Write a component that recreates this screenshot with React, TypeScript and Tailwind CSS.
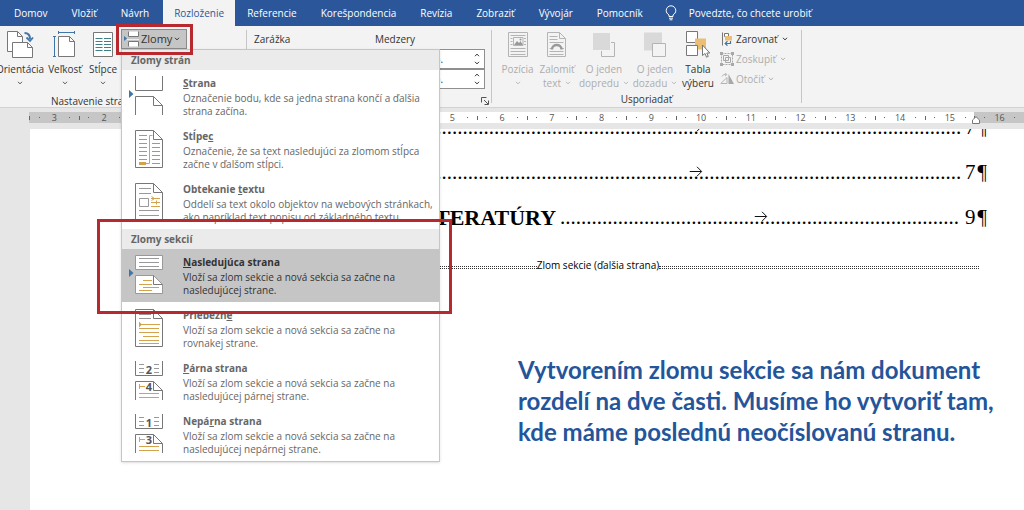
import type { ReactNode } from 'react';

const ui = "font-['Open_Sans','Noto_Sans',sans-serif]";

function Chevron({ className = '' }: { className?: string }) {
  return (
    <svg viewBox="0 0 6 4" className={`inline-block h-1 w-1.5 shrink-0 ${className}`} fill="none" stroke="currentColor">
      <path d="M1 0.8 3 2.9 5 0.8" />
    </svg>
  );
}

const tabs = ['Domov', 'Vložiť', 'Návrh', 'Rozloženie', 'Referencie', 'Korešpondencia', 'Revízia', 'Zobraziť', 'Vývojár', 'Pomocník'];

function TabBar() {
  return (
    <nav className="flex h-[26px] items-stretch bg-[#2b579a] pl-0.5 text-white">
      {tabs.map((t) => (
        <button
          key={t}
          className={
            t === 'Rozloženie'
              ? 'ml-0.5 bg-[#f3f3f3] px-[11px] whitespace-nowrap text-[#2b579a]'
              : 'px-3 whitespace-nowrap'
          }
        >
          {t}
        </button>
      ))}
      <button className="flex items-center gap-3 pr-3 pl-2.5 whitespace-nowrap">
        <svg viewBox="0 0 12 16" className="h-4 w-3" fill="none" stroke="currentColor">
          <path d="M4 11.500V10C2.300 8.800 1.200 7.500 1.200 5.600a4.800 4.800 0 0 1 9.600 0C10.800 7.500 9.700 8.800 8 10v1.500zM4 13.200h4M4.600 14.800h2.800" />
        </svg>
        Povedzte, čo chcete urobiť
      </button>
    </nav>
  );
}

const OrientationIcon = () => (
  <svg viewBox="0 0 28 28" className="h-7 w-7" fill="#fff" stroke="#777">
    <path d="M1.500 20.500V.5h10l5 5v15z" />
    <path d="M11.500.5v5h5" fill="none" />
    <path d="M6.500 26.500v-15h15l5 5v10z" />
    <path d="M21.500 11.500v5h5" fill="none" />
    <path d="M18.500 2c4 0 5.500 2 5.500 6" fill="none" stroke="#3f75a8" strokeWidth="2" />
    <path d="M20.500 6.500 24 10l3-3.500" fill="none" stroke="#3f75a8" strokeWidth="1.800" />
  </svg>
);

const SizeIcon = () => (
  <svg viewBox="0 0 24 28" className="h-7 w-6" fill="none" stroke="#777">
    <path d="M5.500 25.500v-20h11l5 5v15z" fill="#fff" />
    <path d="M16.500 5.500v5h5" />
    <path d="M1.500 5v21M0 5.500h3M0 25.500h3M5 1.500h17M5.500 0v3M21.500 0v3" stroke="#3f75a8" />
  </svg>
);

const ColumnsIcon = () => (
  <svg viewBox="0 0 22 28" className="h-7 w-[22px]" fill="none">
    <path d="M1.500 1.500h19v24h-19z" fill="#fff" stroke="#777" />
    <path d="M3.500 7.500h7M3.500 10.500h7M3.500 13.500h7M3.500 16.500h7M3.500 19.500h7M12 7.500h7M12 10.500h7M12 13.500h7M12 16.500h7M12 19.500h7" stroke="#3f8087" />
  </svg>
);

const PositionIcon = () => (
  <svg viewBox="0 0 22 28" className="h-7 w-[22px]" fill="none" stroke="#b4b4b4">
    <path d="M1.500 1.500h19v24h-19z" />
    <path d="M3.500 4.500h15M3.500 17.500h15M3.500 20.500h15M3.500 23.500h15M3.500 7.500h2M3.500 10.500h2M3.500 13.500h2M17 7.500h2M17 10.500h2M17 13.500h2" />
    <path d="M6.500 6.500h9.500v8H6.500z" />
    <path d="M7 14l3-4 2 2 1.500-2L16 14z" fill="#999" stroke="none" />
    <circle cx="13.500" cy="8.500" r="1" fill="#999" stroke="none" />
  </svg>
);

const WrapIcon = () => (
  <svg viewBox="0 0 22 28" className="h-7 w-[22px]" fill="none" stroke="#b4b4b4">
    <path d="M1.500 25.500v-24h12l6 6v18z" />
    <path d="M13.500 1.500v6h6M3.500 5.500h8M3.500 8.500h8M3.500 11.500h14M3.500 20.500h14M3.500 23.500h14M3.500 17.500h2M16 17.500h2" />
    <path d="M6 18.500c0-6 9.500-6 9.500 0" stroke="#999" strokeWidth="2.500" />
  </svg>
);

const ForwardIcon = () => (
  <svg viewBox="0 0 24 28" className="h-7 w-6" fill="#f3f3f3" stroke="#b4b4b4">
    <path d="M9.500 11.500h13v14h-13z" />
    <path d="M.5 1.500h18v18H.5z" fill="#d9d9d9" stroke="#f3f3f3" />
  </svg>
);

const BackwardIcon = () => (
  <svg viewBox="0 0 24 28" className="h-7 w-6" fill="#f3f3f3" stroke="#b4b4b4">
    <path d="M1 1.500h18v18H1z" fill="#d9d9d9" stroke="none" />
    <path d="M9.500 12.500h13v13h-13z" />
  </svg>
);

const SelectionIcon = () => (
  <svg viewBox="0 0 26 28" className="h-7 w-[26px]" fill="#fff" stroke="#777">
    <path d="M1.500.5h11v11h-11z" />
    <path d="M10 7.500h11v11H10z" fill="#eabf74" stroke="none" />
    <path d="M1.500 14.500h11v10h-11z" />
    <path d="M17.500 14v10.500l2.500-2 1.500 3.700 1.800-.8-1.500-3.400h3z" />
  </svg>
);

const AlignIcon = () => (
  <svg viewBox="0 0 14 14" className="h-3.5 w-3.5" fill="none">
    <path d="M2.500.5v13" stroke="#777" />
    <path d="M4.500 1.500h4v3h-4z" stroke="#777" fill="#fff" />
    <path d="M5 4h7v4.500H5z" fill="#eabf74" />
    <path d="M10.500 9v2.500H5.500M7.500 9.200 5.200 11.500l2.300 2.200" stroke="#3f75a8" strokeWidth="1.200" />
  </svg>
);

const GroupIcon = () => (
  <svg viewBox="0 0 14 14" className="h-3.5 w-3.5" fill="none" stroke="#a8a8a8">
    <path d="M1.500 1.500h11v11h-11z" strokeDasharray="2 1" />
    <path d="M3.500 3.500h5v5h-5zM5.500 5.500h5v5h-5z" />
    <path d="M0 0h3v3H0zM11 0h3v3h-3zM0 11h3v3H0zM11 11h3v3h-3z" fill="#a8a8a8" stroke="none" />
  </svg>
);

const RotateIcon = () => (
  <svg viewBox="0 0 14 14" className="h-3.5 w-3.5" fill="none" stroke="#b4b4b4">
    <path d="M.8 11.500 7 5.500v6z" />
    <path d="M8.500 2v10H14z" fill="#a8a8a8" stroke="none" />
    <path d="M2 4.500C3 2.500 4.500 2 6.500 2.500M5.300 1l1.500 1.600L5 4" />
  </svg>
);

function BigButton({ icon, lines, width, disabled, chevron }: {
  icon: ReactNode;
  lines: string[];
  width: string;
  disabled?: boolean;
  chevron?: 'below' | 'inline';
}) {
  return (
    <button disabled={disabled} className={`flex shrink-0 flex-col items-center pt-[5px] leading-[14px] ${width} ${disabled ? 'text-[#adadad]' : 'text-[#333]'}`}>
      {icon}
      <span className="mt-[3px] whitespace-nowrap">{lines[0]}</span>
      <span className="flex h-3.5 items-center gap-1 whitespace-nowrap">
        {lines[1]}
        {chevron && <Chevron className="opacity-80" />}
      </span>
    </button>
  );
}

function SmallButton({ icon, label, disabled }: { icon: ReactNode; label: string; disabled?: boolean }) {
  return (
    <button disabled={disabled} className={`flex h-5 items-center gap-0.5 whitespace-nowrap ${disabled ? 'text-[#adadad]' : 'text-[#333]'}`}>
      {icon}
      {label}
      <Chevron className="ml-0.5" />
    </button>
  );
}

function Sheet({ children }: { children: ReactNode }) {
  return (
    <svg viewBox="0 0 36 40" className="h-10 w-9 shrink-0" fill="none" stroke="#777">
      {children}
    </svg>
  );
}

const corner = 'M25.500 1.500v9h9';
const fullSheet = 'M7.500 38.500v-37h18l9 9v28z';
const pointer = 'M1 14v8l4.500-4z';
const gold = '#d3a24c';

const PageBreakIcon = () => (
  <Sheet>
    <path d="M7.500 0v14.500h27V0M7.500 39V20.500h18l9 9V39M25.500 20.500v9h9" fill="#fff" />
    <path d={pointer} fill="#3f75a8" stroke="none" />
  </Sheet>
);

const ColumnBreakIcon = () => (
  <Sheet>
    <path d={fullSheet} fill="#fff" />
    <path d={corner} />
    <path d="M11 6.500h8M11 10.500h8M11 14.500h8M11 18.500h8M11 22.500h8M11 26.500h8M11 30.500h8M24 14.500h8M24 18.500h8M24 22.500h8M24 26.500h8M24 30.500h8M24 34.500h8" stroke="#999" />
    <path d="M18 34.500h3.500V6.500h3" stroke={gold} />
    <path d="M11 33h7v3h-7z" fill={gold} stroke="none" />
  </Sheet>
);

const WrapBreakIcon = () => (
  <Sheet>
    <path d={fullSheet} fill="#fff" />
    <path d={corner} />
    <path d="M11 6.500h12M11 11.500h12M11 28.500h20M11 33.500h20M11.500 16.500h9v8h-9z" stroke="#999" />
    <path d="M23 16.500h9M23 20.500h9M23 24.500h9M23.500 14.500l3 2-3 2M28.500 18.500v4" stroke={gold} />
  </Sheet>
);

const NextPageIcon = () => (
  <Sheet>
    <path d="M7.500.5h27v14h-27zM7.500 38.500v-18h18l9 9v9z" fill="#fff" stroke="#999" />
    <path d="M25.500 20.500v9h9" />
    <path d="M11 3.500h20M11 7.500h20M11 11.500h20" stroke="#999" />
    <path d="M15 25.500h9M11 29.500h13M15 32.500h16M11 35.500h13" stroke={gold} />
    <path d={pointer} fill="#3f75a8" stroke="none" />
  </Sheet>
);

const ContinuousIcon = () => (
  <Sheet>
    <path d={fullSheet} fill="#fff" />
    <path d={corner} />
    <path d="M11 6.500h12M11 10.500h12" stroke="#999" />
    <path d="M13 16.500h19M11 20.500h20M11 24.500h20M15 28.500h16M11 32.500h20M11 35.500h20" stroke={gold} />
    <path d="M11 13.500v6l3-3z" fill={gold} stroke="none" />
  </Sheet>
);

function NumberedIcon({ top, bottom }: { top: string; bottom: string }) {
  return (
    <Sheet>
      <path d="M7.500 0v14.500h27V0M7.500 39V20.500h18l9 9V39M25.500 20.500v9h9" fill="#fff" />
      <path d="M11 3.500h5M26 3.500h5M11 7.500h5M26 7.500h5M11 11.500h5M26 11.500h5" stroke="#999" />
      <path d="M11.500 23v5M12 25.500h5M11 32.500h20M11 36.500h20" stroke={gold} />
      <text x="21" y="13" textAnchor="middle" fontSize="11" fontWeight="700" fill="#555" stroke="none">{top}</text>
      <text x="21" y="30" textAnchor="middle" fontSize="11" fontWeight="700" fill="#555" stroke="none">{bottom}</text>
    </Sheet>
  );
}

function MenuItem({ icon, title, children, selected }: {
  icon: ReactNode;
  title: [string, string, string];
  children: ReactNode;
  selected?: boolean;
}) {
  return (
    <button role="menuitem" className={`flex h-[53px] w-full items-start gap-[19px] pr-1 pl-1.5 text-left ${selected ? 'bg-[#c5c5c5] text-[#333]' : 'text-[#666]'}`}>
      <span className="pt-1.5">{icon}</span>
      <span className="block pt-1">
        <strong className="block leading-[18px] font-bold">
          {title[0]}
          <span className="underline">{title[1]}</span>
          {title[2]}
        </strong>
        <span className="block leading-[13px] whitespace-nowrap">{children}</span>
      </span>
    </button>
  );
}

const MenuHeading = ({ children }: { children: ReactNode }) => (
  <h3 className="h-5 bg-[#ebebeb] pl-[9px] leading-5 font-bold text-[#666]">{children}</h3>
);

function BreaksMenu() {
  return (
    <div role="menu" className="absolute top-[21px] left-0 z-10 w-[319px] border border-[#c6c6c6] bg-white shadow-sm">
      <MenuHeading>Zlomy strán</MenuHeading>
      <MenuItem icon={<PageBreakIcon />} title={['', 'S', 'trana']}>
        Označenie bodu, kde sa jedna strana končí a ďalšia<br />strana začína.
      </MenuItem>
      <MenuItem icon={<ColumnBreakIcon />} title={['Stĺpe', 'c', '']}>
        Označenie, že sa text nasledujúci za zlomom stĺpca<br />začne v ďalšom stĺpci.
      </MenuItem>
      <MenuItem icon={<WrapBreakIcon />} title={['Obtekanie ', 't', 'extu']}>
        Oddelí sa text okolo objektov na webových stránkach,<br />ako napríklad text popisu od základného textu.
      </MenuItem>
      <div className="relative">
        <MenuHeading>Zlomy sekcií</MenuHeading>
        <MenuItem selected icon={<NextPageIcon />} title={['', 'N', 'asledujúca strana']}>
          Vloží sa zlom sekcie a nová sekcia sa začne na<br />nasledujúcej strane.
        </MenuItem>
        <div className="pointer-events-none absolute -top-2.5 -left-[25px] h-[95px] w-[355px] border-3 border-[#b8292f]" />
      </div>
      <MenuItem icon={<ContinuousIcon />} title={['Priebežn', 'e', '']}>
        Vloží sa zlom sekcie a nová sekcia sa začne na<br />rovnakej strane.
      </MenuItem>
      <MenuItem icon={<NumberedIcon top="2" bottom="4" />} title={['', 'P', 'árna strana']}>
        Vloží sa zlom sekcie a nová sekcia sa začne na<br />nasledujúcej párnej strane.
      </MenuItem>
      <MenuItem icon={<NumberedIcon top="1" bottom="3" />} title={['Nepá', 'r', 'na strana']}>
        Vloží sa zlom sekcie a nová sekcia sa začne na<br />nasledujúcej nepárnej strane.
      </MenuItem>
    </div>
  );
}

function Spinner({ label }: { label: string }) {
  return (
    <div className="flex h-5 items-center border border-[#8f8f8f] bg-white pr-1 text-[#333]">
      <input aria-label={label} defaultValue="0 b." className="w-full min-w-0 bg-transparent pl-1.5 outline-none" />
      <span className="flex flex-col gap-1">
        <Chevron className="rotate-180" />
        <Chevron />
      </span>
    </div>
  );
}

function Ribbon() {
  return (
    <section className="flex h-[82px] border-b border-[#d2d2d2] bg-[#f3f3f3]">
      <div className="relative flex w-[246px] shrink-0 items-start">
        <div className="-ml-[3px] flex w-[124px] shrink-0 flex-col">
          <div className="flex h-[66px]">
            <BigButton icon={<OrientationIcon />} lines={['Orientácia']} chevron="below" width="w-[46px]" />
            <BigButton icon={<SizeIcon />} lines={['Veľkosť']} chevron="below" width="w-11" />
            <BigButton icon={<ColumnsIcon />} lines={['Stĺpce']} chevron="below" width="w-8" />
          </div>
          <span className="pl-[54px] leading-[18px] whitespace-nowrap text-[#333]">Nastavenie strany</span>
        </div>
        <div className="relative pt-[3px]">
          <button aria-expanded="true" className="flex h-5 w-[66px] items-center gap-0.5 border border-[#8a8a8a] bg-[#c5c5c5] pl-0.5 text-[11px] text-[#333]">
            <svg viewBox="0 0 15 16" className="h-4 w-[15px] shrink-0" fill="#fff" stroke="#777">
              <path d="M4.500.5v5h10v-5M4.500 15.500v-5h10v5" />
              <path d="M3 8.500h12" stroke="#eee" />
              <path d="M0 5v5l3-2.500z" fill="#3f75a8" stroke="none" />
            </svg>
            Zlomy
            <Chevron />
          </button>
          <div className="pointer-events-none absolute -top-0.5 -left-[5px] z-20 h-[31px] w-[77px] border-3 border-[#b8292f]" />
          <div className="absolute top-0.5 left-0">
            <BreaksMenu />
          </div>
        </div>
      </div>
      <div className="my-1 w-px shrink-0 bg-[#c6c6c6]" />
      <div className="relative flex w-[244px] shrink-0 pt-1 pl-[7px] text-[#333]">
        <h3 className="w-[121px] leading-[19px]">Zarážka</h3>
        <div className="w-[110px]">
          <h3 className="leading-[19px]">Medzery</h3>
          <div className="ml-11 flex flex-col">
            <Spinner label="Pred" />
            <Spinner label="Za" />
          </div>
        </div>
        <button aria-label="Nastavenie odseku" className="absolute right-0.5 bottom-0.5">
          <svg viewBox="0 0 8 8" className="h-2 w-2" fill="none" stroke="#555">
            <path d="M.5 5.500v-5h5M3 3l4 4M7.500 3.500v4h-4" />
          </svg>
        </button>
      </div>
      <div className="my-1 w-px shrink-0 bg-[#c6c6c6]" />
      <div className="flex w-[309px] shrink-0 flex-col">
        <div className="flex h-[66px] pl-1.5">
          <BigButton disabled icon={<PositionIcon />} lines={['Pozícia']} chevron="below" width="w-[39px]" />
          <BigButton disabled icon={<WrapIcon />} lines={['Zalomiť', 'text']} chevron="inline" width="w-10" />
          <BigButton disabled icon={<ForwardIcon />} lines={['O jeden', 'dopredu']} chevron="inline" width="w-[54px]" />
          <BigButton disabled icon={<BackwardIcon />} lines={['O jeden', 'dozadu']} chevron="inline" width="w-12" />
          <BigButton icon={<SelectionIcon />} lines={['Tabla', 'výberu']} width="w-[38px]" />
          <div className="pt-[3px] pl-[3px]">
            <SmallButton icon={<AlignIcon />} label="Zarovnať" />
            <SmallButton disabled icon={<GroupIcon />} label="Zoskupiť" />
            <SmallButton disabled icon={<RotateIcon />} label="Otočiť" />
          </div>
        </div>
        <span className="text-center leading-[18px] text-[#333]">Usporiadať</span>
      </div>
      <div className="my-1 w-px shrink-0 bg-[#c6c6c6]" />
    </section>
  );
}

const rulerUnits = Array.from({ length: 20 }, (_, i) => i - 3);

function Ruler() {
  return (
    <div className="bg-[#e6e6e6] pt-1 pb-1.5 pl-[29px]">
      <div className="relative flex h-[11px] text-[9px] leading-[11px] text-[#555]">
        {rulerUnits.map((n) => (
          <div key={n} className={`flex flex-1 items-center justify-between ${n < 0 || n > 15 ? 'bg-[#c6c6c6]' : 'bg-white'}`}>
            <span className="h-1 w-px bg-[#666]" />
            <span className="size-px bg-[#666]" />
            <span className="w-3 text-center">{Math.abs(n)}</span>
            <span className="size-px bg-[#666]" />
            <span />
          </div>
        ))}
        <svg viewBox="0 0 8 8" className="absolute top-1 right-11 size-2" fill="#fff" stroke="#777">
          <path d="M.5 7.500V4L4 .7 7.500 4v3.500z" />
        </svg>
      </div>
    </div>
  );
}

function TocLine({ text, page, dots }: { text?: string; page: number; dots: number }) {
  return (
    <p className="-mr-2 flex h-[45px] items-end pl-[214px] leading-[45px]">
      {text && <strong className="shrink-0 px-1 text-[22px]">{text}</strong>}
      <span className="relative h-[45px] min-w-0 flex-1">
        <span className="block overflow-hidden whitespace-nowrap">{'.'.repeat(dots)}</span>
        <svg viewBox="0 0 13 11" className="absolute top-4 left-1/2 h-[11px] w-[13px] -translate-x-1/2" fill="none" stroke="#111">
          <path d="M0 5.500h12M7.500.8 12.200 5.500l-4.700 4.700" />
        </svg>
      </span>
      <span className="shrink-0 pl-1">{page}</span>
      <span className="shrink-0 pl-0.5">¶</span>
    </p>
  );
}

const DottedRule = () => <span className="mt-1 h-[3px] flex-1 border-y border-dotted border-[#333]" />;

function Document() {
  return (
    <main className="bg-[#e6e6e6] pl-[30px]">
      <div className="min-h-[381px] overflow-hidden bg-white pr-[45px] pl-[187px]">
        <div className="-mt-6 font-['Liberation_Serif',serif] text-[21px] text-black">
          <TocLine page={7} dots={101} />
          <TocLine page={7} dots={101} />
          <TocLine text="TERATÚRY" page={9} dots={76} />
        </div>
        <p className="mt-4 flex items-center leading-[18px] whitespace-nowrap text-black">
          <DottedRule />
          Zlom sekcie (ďalšia strana)
          <DottedRule />
        </p>
        <p className="mt-20 ml-[301px] font-['Lato',sans-serif] text-[24px] leading-[31px] font-bold whitespace-nowrap text-[#24559a]">
          Vytvorením zlomu sekcie sa nám dokument
          <br />
          rozdelí na dve časti. Musíme ho vytvoriť tam,
          <br />
          kde máme poslednú neočíslovanú stranu.
        </p>
      </div>
    </main>
  );
}

export default function App() {
  return (
    <div className={`min-h-screen overflow-x-hidden bg-white text-[10px] ${ui}`}>
      <TabBar />
      <Ribbon />
      <Ruler />
      <Document />
    </div>
  );
}
